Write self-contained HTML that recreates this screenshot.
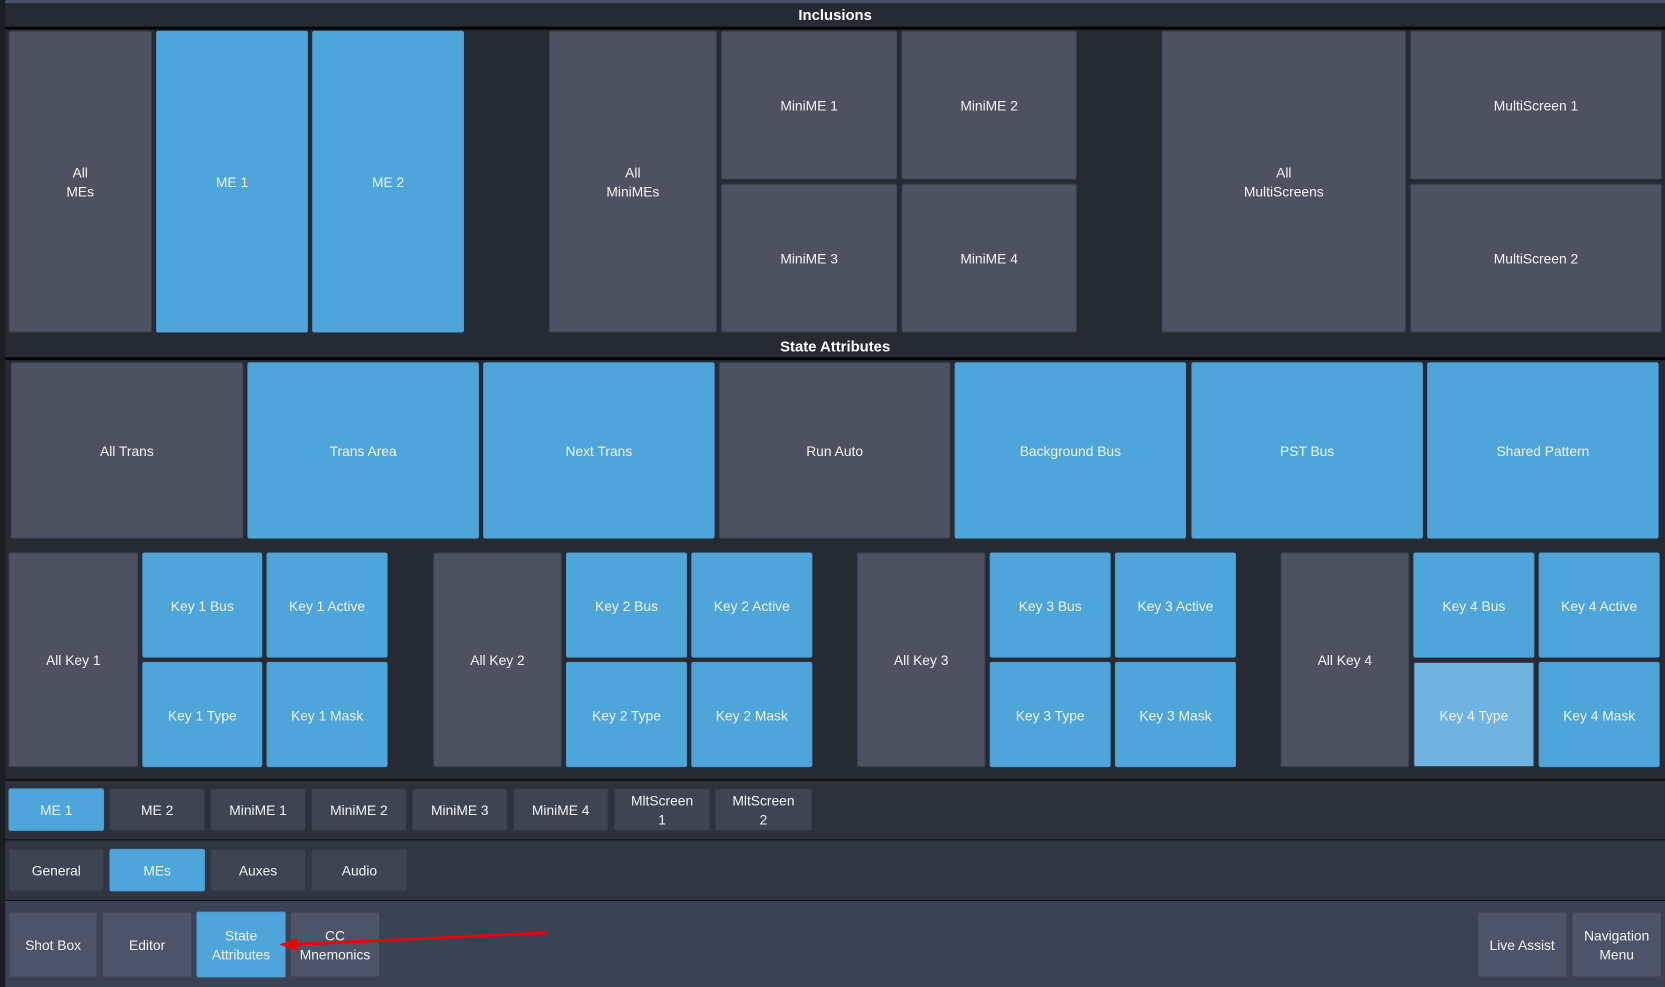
<!DOCTYPE html>
<html><head><meta charset="utf-8"><style>
html,body{margin:0;padding:0;width:1665px;height:987px;overflow:hidden;background:#262a33}
#w{position:absolute;left:0;top:0;width:1568px;height:929px;transform:scale(1.06186,1.06243);transform-origin:0 0;background:#262a33;font-family:"Liberation Sans",sans-serif;color:#fff}
.b{position:absolute;display:flex;align-items:center;justify-content:center;text-align:center;font-size:13px;line-height:18px;padding-top:2px;background:#4e5260;border-radius:2px;box-sizing:border-box;border:1px solid #3f434f;color:#f2f4f7}
.u{background:#4da5d9;border-color:#4a9fd2}
.lu{background:#6fb4e0}
.t{position:absolute;left:5px;right:0;text-align:center;font-weight:bold;font-size:14px}
.ln{position:absolute;left:5px;right:0;height:3px;background:#050608}
.m{background:#3f4452;border-color:#353a46}
</style></head><body><div id="w">
<div style="position:absolute;left:0;top:0;width:1568px;height:3px;background:#4a5162"></div>
<div style="position:absolute;left:0;top:0;width:5px;height:929px;background:#1a1d22"></div>
<div class="t" style="top:6px">Inclusions</div>
<div class="ln" style="top:25px"></div>
<div class="b" style="left:8px;top:29px;width:135px;height:284px">All<br>MEs</div>
<div class="b u" style="left:147px;top:29px;width:143px;height:284px">ME 1</div>
<div class="b u" style="left:294px;top:29px;width:143px;height:284px">ME 2</div>
<div class="b" style="left:517px;top:29px;width:158px;height:284px">All<br>MiniMEs</div>
<div class="b" style="left:679px;top:29px;width:166px;height:140px">MiniME 1</div>
<div class="b" style="left:849px;top:29px;width:165px;height:140px">MiniME 2</div>
<div class="b" style="left:679px;top:173px;width:166px;height:140px">MiniME 3</div>
<div class="b" style="left:849px;top:173px;width:165px;height:140px">MiniME 4</div>
<div class="b" style="left:1094px;top:29px;width:230px;height:284px">All<br>MultiScreens</div>
<div class="b" style="left:1328px;top:29px;width:237px;height:140px">MultiScreen 1</div>
<div class="b" style="left:1328px;top:173px;width:237px;height:140px">MultiScreen 2</div>
<div class="t" style="top:318px">State Attributes</div>
<div class="ln" style="top:336px"></div>
<div class="b" style="left:10px;top:341px;width:219px;height:166px">All Trans</div>
<div class="b u" style="left:233px;top:341px;width:218px;height:166px">Trans Area</div>
<div class="b u" style="left:455px;top:341px;width:218px;height:166px">Next Trans</div>
<div class="b" style="left:677px;top:341px;width:218px;height:166px">Run Auto</div>
<div class="b u" style="left:899px;top:341px;width:218px;height:166px">Background Bus</div>
<div class="b u" style="left:1122px;top:341px;width:218px;height:166px">PST Bus</div>
<div class="b u" style="left:1344px;top:341px;width:218px;height:166px">Shared Pattern</div>

<div class="b" style="left:8px;top:520px;width:122px;height:202px">All Key 1</div>
<div class="b u" style="left:134px;top:520px;width:113px;height:99px">Key 1 Bus</div>
<div class="b u" style="left:251px;top:520px;width:114px;height:99px">Key 1 Active</div>
<div class="b u" style="left:134px;top:623px;width:113px;height:99px">Key 1 Type</div>
<div class="b u" style="left:251px;top:623px;width:114px;height:99px">Key 1 Mask</div>

<div class="b" style="left:408px;top:520px;width:121px;height:202px">All Key 2</div>
<div class="b u" style="left:533px;top:520px;width:114px;height:99px">Key 2 Bus</div>
<div class="b u" style="left:651px;top:520px;width:114px;height:99px">Key 2 Active</div>
<div class="b u" style="left:533px;top:623px;width:114px;height:99px">Key 2 Type</div>
<div class="b u" style="left:651px;top:623px;width:114px;height:99px">Key 2 Mask</div>

<div class="b" style="left:807px;top:520px;width:121px;height:202px">All Key 3</div>
<div class="b u" style="left:932px;top:520px;width:114px;height:99px">Key 3 Bus</div>
<div class="b u" style="left:1050px;top:520px;width:114px;height:99px">Key 3 Active</div>
<div class="b u" style="left:932px;top:623px;width:114px;height:99px">Key 3 Type</div>
<div class="b u" style="left:1050px;top:623px;width:114px;height:99px">Key 3 Mask</div>

<div class="b" style="left:1206px;top:520px;width:121px;height:202px">All Key 4</div>
<div class="b u" style="left:1331px;top:520px;width:114px;height:99px">Key 4 Bus</div>
<div class="b u" style="left:1449px;top:520px;width:114px;height:99px">Key 4 Active</div>
<div class="b lu" style="left:1331px;top:623px;width:114px;height:99px">Key 4 Type</div>
<div class="b u" style="left:1449px;top:623px;width:114px;height:99px">Key 4 Mask</div>

<div style="position:absolute;left:5px;top:733px;width:1563px;height:2px;background:#0e1014"></div>
<div style="position:absolute;left:5px;top:735px;width:1563px;height:55px;background:#2c313c"></div>
<div class="b u" style="left:8px;top:742px;width:90px;height:40px">ME 1</div>
<div class="b m" style="left:103px;top:742px;width:90px;height:40px">ME 2</div>
<div class="b m" style="left:198px;top:742px;width:90px;height:40px">MiniME 1</div>
<div class="b m" style="left:293px;top:742px;width:90px;height:40px">MiniME 2</div>
<div class="b m" style="left:388px;top:742px;width:90px;height:40px">MiniME 3</div>
<div class="b m" style="left:483px;top:742px;width:90px;height:40px">MiniME 4</div>
<div class="b m" style="left:578px;top:742px;width:91px;height:40px">MltScreen<br>1</div>
<div class="b m" style="left:673px;top:742px;width:92px;height:40px">MltScreen<br>2</div>
<div style="position:absolute;left:5px;top:790px;width:1563px;height:1px;background:#0e1014"></div>
<div style="position:absolute;left:5px;top:791px;width:1563px;height:56px;background:#313642"></div>
<div class="b m" style="left:8px;top:799px;width:90px;height:40px">General</div>
<div class="b u" style="left:103px;top:799px;width:90px;height:40px">MEs</div>
<div class="b m" style="left:198px;top:799px;width:90px;height:40px">Auxes</div>
<div class="b m" style="left:293px;top:799px;width:91px;height:40px">Audio</div>
<div style="position:absolute;left:5px;top:847px;width:1563px;height:1px;background:#0e1014"></div>
<div style="position:absolute;left:5px;top:848px;width:1563px;height:81px;background:#3b4253"></div>
<div class="b" style="left:8px;top:858px;width:84px;height:62px;background:#4d5468">Shot Box</div>
<div class="b" style="left:96px;top:858px;width:85px;height:62px;background:#4d5468">Editor</div>
<div class="b u" style="left:185px;top:858px;width:84px;height:62px">State<br>Attributes</div>
<div class="b" style="left:273px;top:858px;width:85px;height:62px;background:#4d5468">CC<br>Mnemonics</div>
<div class="b" style="left:1391px;top:858px;width:85px;height:62px;background:#4d5468">Live Assist</div>
<div class="b" style="left:1480px;top:858px;width:85px;height:62px;background:#4d5468">Navigation<br>Menu</div>
<svg style="position:absolute;left:0;top:0" width="1568" height="929"><line x1="515" y1="878" x2="275" y2="889" stroke="#e00" stroke-width="2.5"/><polygon points="263,889 280,883 280,895" fill="#e00"/></svg>
</div></body></html>
